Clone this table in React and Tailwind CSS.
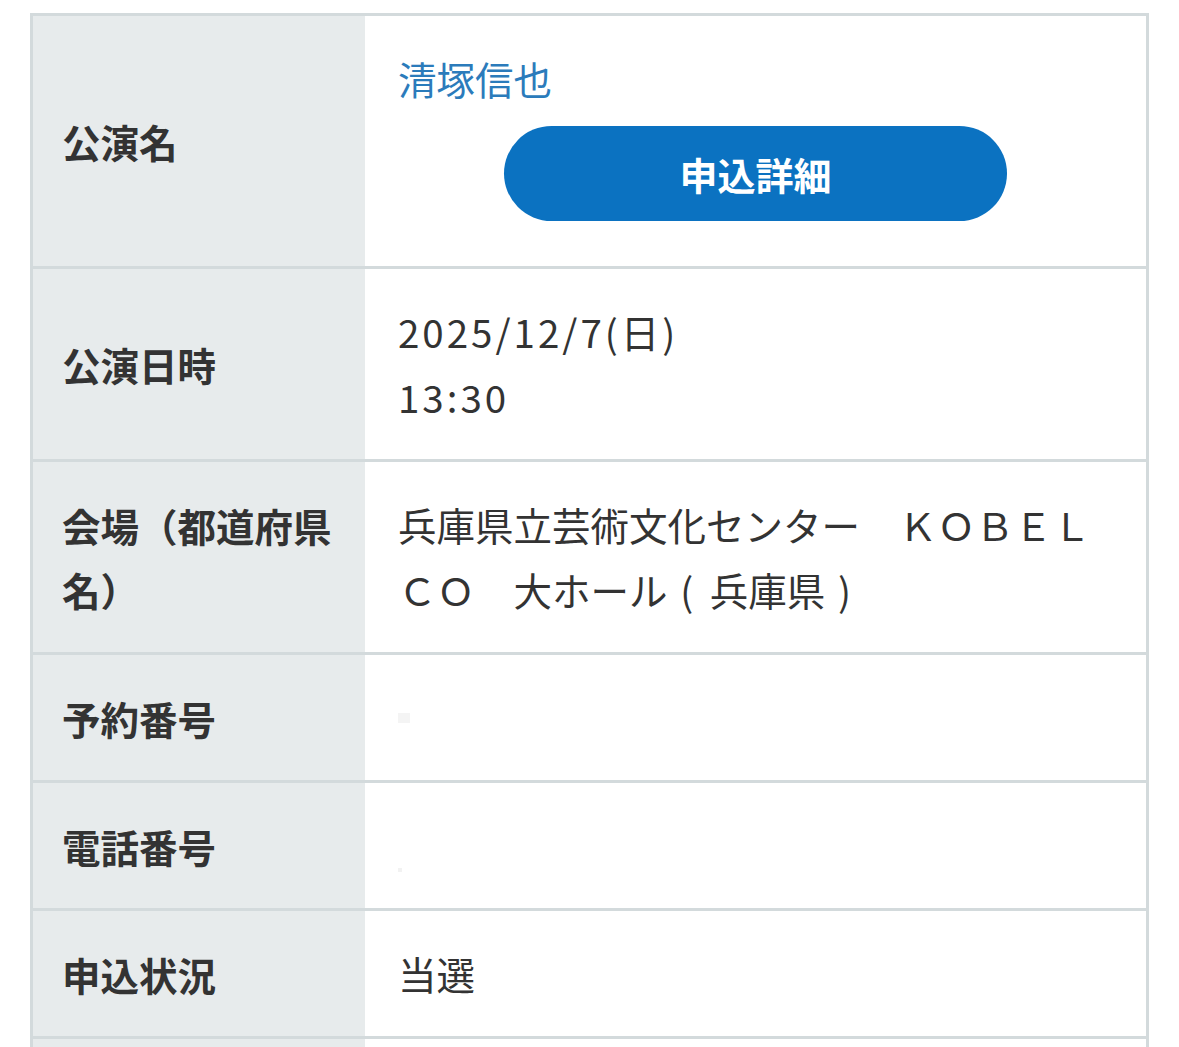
import React from "react";

const font = { fontFamily: '"Noto Sans CJK JP", "Noto Sans", sans-serif' };

function Row({ label, children, first }) {
  return (
    <div className={`grid grid-cols-[332px_1fr] ${first ? "" : "border-t-[3px] border-[#d3dadc]"}`}>
      <div className="flex items-center bg-[#e7ebec] px-[29px] py-[30px] text-[38.5px] font-bold leading-[64px] text-[#333333]">
        <div>{label}</div>
      </div>
      <div className="flex flex-col justify-center bg-white px-[33px] py-[30px] text-[38.5px] leading-[65px] text-[#333333]">
        {children}
      </div>
    </div>
  );
}

export default function App() {
  return (
    <div className="min-h-screen bg-white pt-[13px] pl-[30px] pr-[30px]" style={font}>
      <div className="w-[1119px] border-[3px] border-b-0 border-[#d3dadc]">
        <Row label="公演名" first>
          <div className="text-[#2b7bbb] leading-[65px]">清塚信也</div>
          <div className="flex justify-center py-[15px]">
            <button className="h-[95px] w-[503px] rounded-full bg-[#0b72c1] text-[38px] font-bold text-white">
              申込詳細
            </button>
          </div>
        </Row>
        <Row label="公演日時">
          <div className="tracking-[3px]">2025/12/7(日)</div>
          <div className="tracking-[3px]">13:30</div>
        </Row>
        <Row label="会場（都道府県名）">
          <div>
            兵庫県立芸術文化センター　ＫＯＢＥＬ
            <br />
            ＣＯ　大ホール<span className="tracking-[4px]"> ( </span>兵庫県<span className="tracking-[4px]"> )</span>
          </div>
        </Row>
        <Row label="予約番号">
          <div className="flex h-[65px] items-center">
            <span className="h-[10px] w-[12px] bg-[#f4f4f4]"></span>
          </div>
        </Row>
        <Row label="電話番号">
          <div className="flex h-[65px] items-end pb-[6px]">
            <span className="h-[4px] w-[4px] bg-[#f2f2f2]"></span>
          </div>
        </Row>
        <Row label="申込状況">
          <div>当選</div>
        </Row>
        <Row label="">
          <div className="h-[65px]"></div>
        </Row>
      </div>
    </div>
  );
}
